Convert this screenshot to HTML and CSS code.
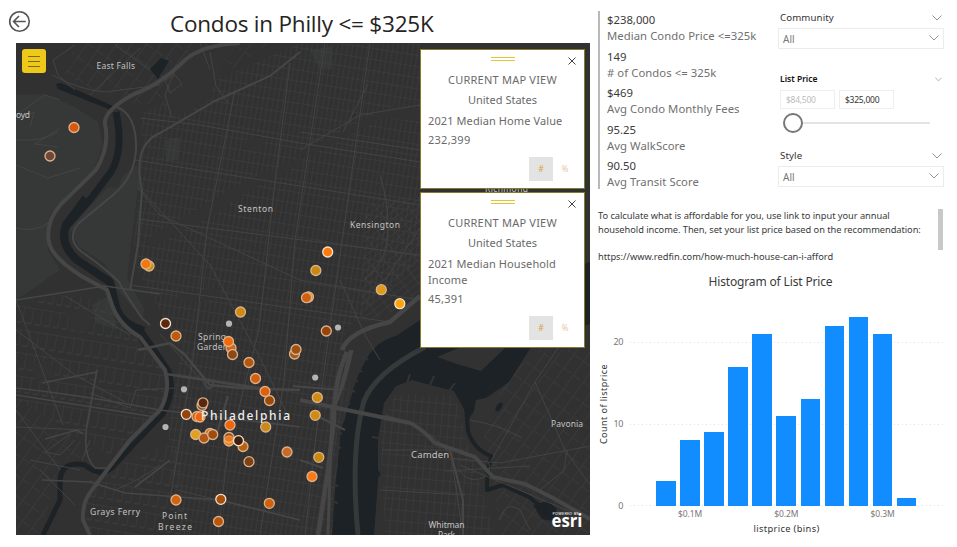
FILE: index.html
```html
<!DOCTYPE html>
<html lang="en">
<head>
<meta charset="utf-8">
<title>Condos in Philly</title>
<link rel="stylesheet" href="styles.css">
</head>
<body>
<div class="report">
  <main class="left">
    <header class="head">
      <svg class="back" viewBox="0 0 24 24"><circle cx="12" cy="12" r="10.2"/><path d="M18.5 12H6M11.5 6.3 5.8 12l5.7 5.7"/></svg>
      <h1><span>Condos in Philly &lt;= $325K</span></h1>
    </header>
    <section class="map">
      <svg class="basemap" viewBox="16 43 574 492">
        <defs>
          <pattern id="fine" width="5" height="11" patternUnits="userSpaceOnUse" patternTransform="rotate(9)"><path d="M0 0V11M0 0H5"/></pattern>
          <pattern id="fine2" width="9" height="23" patternUnits="userSpaceOnUse" patternTransform="rotate(9)"><path d="M0 0V16M0 0H9M4 16H9"/></pattern>
          <pattern id="diag" width="6" height="13" patternUnits="userSpaceOnUse" patternTransform="rotate(52)"><path d="M0 0V13M0 0H6"/></pattern>
          <pattern id="loose" width="12" height="17" patternUnits="userSpaceOnUse" patternTransform="rotate(36)"><path d="M0 0V17M0 0H9"/></pattern>
          <pattern id="camden" width="7" height="11" patternUnits="userSpaceOnUse" patternTransform="rotate(5)"><path d="M0 0V11M0 0H7"/></pattern>
        </defs>
        <rect x="16" y="43" width="574" height="492" fill="#313131"/>
        <g class="park">
          <path d="M16 95 45 94 75 107 98 122 103 145 94 170 70 192 50 215 48 250 60 270 16 300Z"/>
          <path d="M138 188 108 187 70 228 78 246 105 264 118 290 142 319 145 310 127 278Z"/>
          <path d="M118 188 142 190 137 164 123 176Z"/>
          <path d="M310 50 332 46 333 69 320 70Z"/>
          <path d="M165 140 180 137 178 160 166 161Z"/>
          <path d="M92 305 110 295 118 330 96 323Z"/>
        </g>
        <g class="blocks">
          <path fill="url(#fine)" d="M143 113 300 43H420V260L345 330 350 385 335 535H180L168 430 180 350 133 260Z"/>
          <path fill="url(#fine2)" d="M60 295 110 300 135 335 168 375 160 415 110 455 16 400V305Z"/>
          <path fill="url(#fine2)" d="M90 475 180 440 185 535H85Z"/>
          <path fill="url(#loose)" d="M75 43H270L180 105 120 103 65 75ZM16 395 100 455 60 460 40 535H16Z"/>
          <path fill="url(#diag)" d="M365 205 420 195V300L360 325Z"/>
          <path fill="url(#camden)" d="M395 395 455 395 465 435 495 535H385L380 430Z"/>
          <path fill="url(#loose)" d="M475 400 540 350H590V535H500L490 465Z"/>
        </g>
        <g class="clear">
          <path d="M178 293 219 288 221 299 180 303ZM242 141 258 136 264 144 260 151 244 149ZM145 240 245 181 300 158 302 164 250 190 210 217 150 248ZM300 152 390 107 420 109V121L382 118 305 158Z"/>
          <path d="M67 312 92 308 88 333 73 330ZM32 365 51 360 53 377 36 381ZM182 60 235 44 205 105 175 115 160 95Z"/>
        </g>
        <g class="water">
          <path d="M377 348Q361 360 351 398L341 430 335 490 332 535H374L378 480 378 438 384 403 396 386 412 380 430 385 454 391 464 409 468 420 480 402 509 382 531 347Z"/>
          <path d="M366 360Q376 341 396 336L420 320 590 262V324L540 340 500 362 370 378Z"/>
          <path d="M533 505 548 501 557 509 553 521 542 519Z"/>
          <path d="M150 69 161 58 169 61 158 79ZM56 84 61 83 113 106 111 110 58 89Z"/>
        </g>
        <path class="land" d="M437 357 466 345 510 330 504 349 481 371 457 364Z"/>
        <path class="land" d="M476 400 499 395 500 405 490 418 471 427Z"/>
        <g class="river">
          <path stroke-width="7" d="M116 112Q124 150 111 172L89 201 66 227"/>
          <path stroke-width="8" d="M86 198 66 225Q59 244 77 260L110 282 116 307Q121 324 144 331"/>
          <path stroke-width="10" d="M136 327 149 346"/>
          <path stroke-width="5" d="M150 343 169 371Q176 393 163 414L134 444 112 468Q101 478 85 465 62 460 60 480V500L43 535"/>
          <path stroke-width="4" d="M466 405 468 431Q474 450 491 456L487 478V490L503 485 529 497 548 512"/>
        </g>
        <g class="piers"><path d="M368 360 358 354M362 372 352 365M358 382 349 376M355 392 347 388M350 404 342 400M345 419 338 416M342 434 336 431M341 448 335 446M338 466 331 464M338 486 331 484M338 503 331 501M378 438 372 437M407 383 410 374M430 385 434 376M449 391 455 383"/></g>
        <circle class="dotwater" cx="377" cy="474" r="3.2"/>
        <ellipse class="dotwater" cx="499" cy="407" rx="2.5" ry="5" transform="rotate(35 499 407)"/>
        <g class="minor">
          <path d="M52 75Q80 90 105 92L160 85M60 100 45 95 16 115M75 45 53 60 58 75 75 90M140 48 90 95M115 45 150 70M210 52 216 86 228 103M175 70 165 95 172 118M165 80 175 75 182 84 170 93Z"/>
          <path d="M16 140Q40 142 58 132M16 165 48 178 80 168M16 120 34 112 30 127M58 147 35 144 60 128M16 228Q35 233 50 222M140 118 200 125 300 143 420 162M135 160 420 205M138 188 160 215 300 280 420 300"/>
          <path d="M290 63 274 190 259 330 228 450 218 535M235 90 207 230 193 360 170 500M325 43 295 240 284 380 260 535M370 43 345 220 320 400 305 535M138 219 420 255M130 285 390 322M16 300 63 425M16 330 75 375 125 402M65 296 130 335"/>
          <path d="M143 192 210 265 260 358 290 420M160 334 210 390M420 105 360 115 300 150M368 84 343 132M300 132 420 150M177 490 300 520M90 393 130 408 136 390 175 388"/>
          <path d="M16 427 85 430M30 460 80 470M75 505 40 470M16 410 60 470M75 440 60 455 45 452 70 434M90 440 82 460M115 490Q140 480 160 465"/>
          <path d="M385 415Q430 427 451 455L463 535M450 458 500 463 590 446M445 471 530 466M460 465 590 520M470 420Q500 425 522 438M491 461 535 382 558 348M535 382 565 450 590 485M567 450 564 470 540 490M382 450H450M380 490 465 495M460 470a15 12 0 1 0 28-8M500 520Q505 500 520 510L530 530"/>
          <path d="M200 43 210 70M380 175Q395 225 382 260L365 280M385 280 420 228M380 360 365 335 340 280"/>
        </g>
        <g class="road">
          <path stroke-width="4" d="M240 43Q202 45 185 60 160 85 134 94 103 111 105 124 110 147 96 170L61 204Q45 223 49 242 52 258 83 277L107 290 112 305Q119 325 140 337L165 370Q171 390 160 410L130 440 107 470 92 490Q82 502 83 520L90 535"/>
          <path stroke-width="2" d="M130 290 138 244 142 190Q132 145 160 133L215 101 270 76 300 52M117 107Q137 115 136 150 134 178 113 195L78 224Q66 240 82 252 105 268 119 282 124 292 142 318L150 325"/>
          <path stroke-width="1.6" d="M16 300 105 286 160 294M16 388Q80 395 160 410L300 427M16 395 155 417M42 480 90 482 125 493 220 500 300 520M97 370 87 425Q82 455 95 468L110 468M42 383 97 372M135 487 170 460M45 439 77 430 83 434"/>
          <path stroke-width="2.5" d="M138 350 170 343 185 355 210 385 240 388 300 390M166 374 270 390M228 396 215 440"/>
          <path stroke-width="4.5" d="M342 350Q349 331 390 322L420 296M347 352Q334 380 334 420L328 470 318 535"/>
          <path stroke-width="3" d="M352 350Q343 392 332 410L328 535"/>
          <path class="dim" stroke-width="5" d="M425 347Q375 373 364 401 350 450 358 535"/>
          <path stroke-width="4" d="M300 400 342 409 410 423Q420 427 435 443L475 457 493 477 525 484 553 498 590 519"/>
          <path stroke-width="2" d="M293 386 340 390 350 350M315 415 345 430M450 450 463 500 463 535M300 460 323 468"/>
          <circle cx="209" cy="384" r="4" stroke-width="2"/>
        </g>
        <g class="labels">
          <text x="96.500" y="69" textLength="38.500">East Falls</text>
          <text x="16" y="117.500" textLength="14">oyd</text>
          <text x="238" y="212" textLength="35">Stenton</text>
          <text x="350" y="228" textLength="50">Kensington</text>
          <text x="485" y="191.500" textLength="43">Richmond</text>
          <text x="198" y="339.500" textLength="28">Spring</text>
          <text x="197" y="349.500" textLength="31">Garden</text>
          <text x="90" y="515" textLength="50">Grays Ferry</text>
          <text x="162" y="518.500" textLength="25">Point</text>
          <text x="158" y="529.500" textLength="34">Breeze</text>
          <text x="551" y="427" textLength="32">Pavonia</text>
          <text class="md" x="411" y="458" textLength="38">Camden</text>
          <text x="428.500" y="528" textLength="36">Whitman</text>
          <text x="438" y="537.500" textLength="17">Park</text>
        </g>
        <g class="pins">
          <circle cx="74" cy="127.500" r="5" fill="#d8590c"/><circle cx="50" cy="156" r="5" fill="#704838" stroke="#b99d8c"/>
          <circle cx="149" cy="266" r="5" fill="#c79210"/><circle cx="146" cy="264" r="5" fill="#f0780c"/>
          <circle cx="240.500" cy="312" r="5" fill="#d08a10"/><circle class="hi" cx="165.500" cy="323.500" r="5" fill="#5e2a0c"/>
          <circle cx="176" cy="336" r="5" fill="#bd5a0c"/><circle cx="231" cy="348" r="5" fill="#d0661a"/>
          <circle cx="228.500" cy="341.500" r="5" fill="#f06a0a"/><circle cx="232.500" cy="354.500" r="5" fill="#8a4a16"/>
          <circle cx="249" cy="362.500" r="5" fill="#b5560e"/><circle cx="255.500" cy="378.500" r="5" fill="#d2600e"/>
          <circle cx="269.500" cy="400.500" r="5" fill="#9c4a0a"/><circle cx="265" cy="391.500" r="5" fill="#e0600a"/>
          <circle cx="294.500" cy="354" r="5" fill="#a05c20"/><circle cx="296" cy="349.500" r="5" fill="#a05010"/>
          <circle cx="326.300" cy="331" r="5" fill="#964408"/><circle cx="308.500" cy="297" r="5" fill="#f09020"/>
          <circle cx="306.500" cy="297.700" r="5" fill="#d06010"/><circle cx="315.800" cy="270.500" r="5" fill="#c98a12"/>
          <circle class="hi" cx="327.700" cy="252" r="5" fill="#fa7a0c"/><circle cx="381.300" cy="289.700" r="5" fill="#e09a1c"/>
          <circle class="hi" cx="399.800" cy="303.700" r="5" fill="#fca408"/><circle cx="317.300" cy="397.500" r="5" fill="#d08c10"/>
          <circle cx="315.200" cy="415.300" r="5" fill="#d08c10"/><circle cx="265.700" cy="427" r="5" fill="#c98a18"/>
          <circle cx="318.800" cy="457.300" r="5" fill="#c8890f"/><circle cx="312" cy="476.500" r="5" fill="#fb7a14"/>
          <circle cx="287" cy="452" r="5" fill="#c86a28"/><circle cx="249" cy="461.700" r="5" fill="#7c4216"/>
          <circle cx="202" cy="405.500" r="5" fill="#8a4a28"/><circle cx="203" cy="402.800" r="5" fill="#5a2810"/>
          <circle class="hi" cx="186.300" cy="414.300" r="5" fill="#94440c"/><circle cx="197" cy="416.500" r="5" fill="#d85a0a"/>
          <circle cx="200" cy="417" r="5" fill="#f0640a"/><circle cx="230" cy="425" r="5" fill="#f0640a"/>
          <circle cx="195.700" cy="434.500" r="5" fill="#e0a024"/><circle cx="210" cy="433.500" r="5" fill="#d06a2a"/>
          <circle cx="204" cy="438" r="5" fill="#b05818"/><circle cx="212.700" cy="434.500" r="5" fill="#a04c0c"/>
          <circle cx="229" cy="441" r="5" fill="#fc8008"/><circle cx="229" cy="437.500" r="5" fill="#e87020" fill-opacity=".5"/>
          <circle cx="243" cy="446.500" r="5" fill="#b8640c"/><circle class="hi" cx="238.500" cy="440.700" r="5" fill="#3e2010"/>
          <circle cx="176" cy="500" r="5" fill="#d06412"/><circle class="hi" cx="220.800" cy="499.300" r="5" fill="#a8500a"/>
          <circle cx="218.500" cy="521.500" r="5" fill="#b8560c"/><circle cx="269.300" cy="503.300" r="5" fill="#d0600e"/>
        </g>
        <g class="spots"><circle cx="229" cy="323.700" r="3.100"/><circle cx="338" cy="327.500" r="3.100"/><circle cx="315.200" cy="377.500" r="3.100"/><circle cx="184" cy="389.300" r="3.100"/><circle cx="165.500" cy="427" r="3.100"/></g>
        <g class="labels">
          <text class="city" x="201" y="420" textLength="89">Philadelphia</text>
          <text class="pow" x="552.500" y="515" textLength="26">POWERED BY</text>
          <text class="esri" x="551.500" y="527" textLength="31" lengthAdjust="spacingAndGlyphs">esri</text>
        </g>
      </svg>
      <button class="menu"><i></i><i></i><i></i></button>
      <div class="cards">
        <article class="card first">
          <div class="grip"></div>
          <svg class="close" viewBox="0 0 8 8"><path d="M.5.500 7.500 7.500M7.500.500.500 7.500"/></svg>
          <h2>CURRENT MAP VIEW</h2><h3>United States</h3>
          <p class="name wide">2021 Median Home Value</p><p class="val">232,399</p>
          <div class="toggle"><b>#</b><span>%</span></div>
        </article>
        <article class="card second">
          <div class="grip"></div>
          <svg class="close" viewBox="0 0 8 8"><path d="M.5.500 7.500 7.500M7.500.500.500 7.500"/></svg>
          <h2>CURRENT MAP VIEW</h2><h3>United States</h3>
          <p class="name wide">2021 Median Household<br>Income</p><p class="val">45,391</p>
          <div class="toggle"><b>#</b><span>%</span></div>
        </article>
      </div>
    </section>
  </main>
  <aside class="right">
    <div class="top">
      <dl class="kpis">
        <div><dt>$238,000</dt><dd>Median Condo Price &lt;=325k</dd></div>
        <div><dt>149</dt><dd># of Condos &lt;= 325k</dd></div>
        <div><dt>$469</dt><dd>Avg Condo Monthly Fees</dd></div>
        <div><dt>95.25</dt><dd>Avg WalkScore</dd></div>
        <div><dt>90.50</dt><dd>Avg Transit Score</dd></div>
      </dl>
      <div class="slicers">
        <section class="slicer community">
          <h4>Community<svg class="chev" viewBox="0 0 10 6"><path d="M.5.500 5 5 9.500.500"/></svg></h4>
          <div class="select">All<svg class="chev" viewBox="0 0 10 6"><path d="M.5.500 5 5 9.500.500"/></svg></div>
        </section>
        <section class="slicer price">
          <h4><span>List Price</span><svg class="chev small" viewBox="0 0 10 6"><path d="M.5.500 5 5 9.500.500"/></svg></h4>
          <div class="range"><div class="off">$84,500</div><div>$325,000</div></div>
          <div class="slider"><i></i></div>
        </section>
        <section class="slicer style">
          <h4>Style<svg class="chev" viewBox="0 0 10 6"><path d="M.5.500 5 5 9.500.500"/></svg></h4>
          <div class="select">All<svg class="chev" viewBox="0 0 10 6"><path d="M.5.500 5 5 9.500.500"/></svg></div>
        </section>
      </div>
    </div>
    <div class="note">
      <p>To calculate what is affordable for you, use link to input your annual<br>household income. Then, set your list price based on the recommendation:<br><br><span class="link">https://www.redfin.com/how-much-house-can-i-afford</span></p>
      <div class="thumb"></div>
    </div>
    <section class="chart">
      <h5>Histogram of List Price</h5>
      <div class="plotrow">
        <div class="ytitle"><span>Count of listprice</span></div>
        <div class="yaxis"><span>20</span><span>10</span><span>0</span></div>
        <div class="plot">
          <i style="height:24.600px"></i><i style="height:65.600px"></i><i style="height:73.800px"></i><i style="height:139.400px"></i><i style="height:172.200px"></i><i style="height:90.200px"></i><i style="height:106.600px"></i><i style="height:180.400px"></i><i style="height:188.600px"></i><i style="height:172.200px"></i><i style="height:8.200px"></i>
        </div>
      </div>
      <div class="xaxis"><span>$0.1M</span><span>$0.2M</span><span>$0.3M</span></div>
      <div class="xtitle">listprice (bins)</div>
    </section>
  </aside>
</div>
</body>
</html>
```
FILE: styles.css
```css
* { box-sizing: border-box; }
body { margin: 0; background: #fff; font-family: "Noto Sans", "Open Sans", sans-serif; color: #333; }
h1, h2, h3, h4, h5, p, dl, dd { margin: 0; font-weight: 400; }
.report { width: 957px; height: 547px; display: grid; grid-template-columns: 590px 367px; overflow: hidden; }

.head { height: 43px; padding-left: 8px; display: flex; align-items: center; }
.back { width: 23px; height: 23px; fill: none; stroke: #555; stroke-width: 1.7; }
h1 { margin-left: 139px; font: 22.500px/32px "Open Sans", sans-serif; letter-spacing: -.22px; color: #252423; white-space: nowrap; padding-top: 4px; }

.map { position: relative; width: 574px; height: 492px; margin-left: 16px; overflow: hidden; }
.basemap { display: block; width: 574px; height: 492px; }
.basemap pattern path { stroke: #444; stroke-width: .75; fill: none; }
.park path { fill: #353837; }
.clear path, .land { fill: #323232; }
.water path, .dotwater { fill: #1c2225; }
.river path { fill: none; stroke: #1c2225; stroke-linejoin: round; }
.piers path { stroke: #333; stroke-width: 2; }
.minor path { fill: none; stroke: #454545; stroke-width: .9; }
.road path, .road circle { fill: none; stroke: #464646; }
.road .dim { stroke: #363939; }
.labels text { font: 8.5px "Noto Sans", sans-serif; fill: #c3c3c3; }
.labels .md { font-size: 9.500px; }
.labels .city { font-size: 12px; font-weight: 500; fill: #eee; }
.labels .pow { font-size: 3.800px; fill: #fff; }
.labels .esri { font: bold 17px "Open Sans", sans-serif; fill: #fff; }
.pins circle { stroke: #dcb28c; stroke-width: 1.300; }
.pins .hi { stroke: #f6e2d0; }
.spots circle { fill: #b4b4b4; }

.menu { position: absolute; left: 6px; top: 6px; width: 24px; height: 24px; padding: 0; border: 0; border-radius: 3px; background: #efc919; display: flex; flex-direction: column; align-items: center; justify-content: center; gap: 4px; }
.menu i { width: 12px; height: 1px; background: #7c6910; }
.cards { position: absolute; left: 404px; top: 6px; width: 165px; display: flex; flex-direction: column; gap: 3px; }
.card { position: relative; background: #fff; border: 1.500px solid #877a2c; padding: 7px 7px 0; color: #6a6a6a; font-size: 11px; }
.first { height: 140px; }
.second { height: 156px; }
.grip { width: 24px; height: 4px; margin: 0 auto; border-top: 1px solid #dfc637; border-bottom: 1px solid #dfc637; }
.close { position: absolute; right: 8px; top: 7px; width: 8px; height: 8px; fill: none; stroke: #444; stroke-width: 1; overflow: visible; }
.card h2, .card h3 { font-size: 11px; text-align: center; line-height: 20px; }
.card h2 { margin-top: 9px; letter-spacing: .22px; }
.name { line-height: 16px; margin-top: 3px; white-space: nowrap; }
.wide { letter-spacing: .1px; }
.val { line-height: 21px; letter-spacing: .25px; }
.toggle { position: absolute; right: 7px; bottom: 7px; display: flex; font-size: 8px; line-height: 24px; text-align: center; color: #ecc69d; }
.toggle b, .toggle span { width: 24px; height: 24px; font-weight: 400; }
.toggle b { background: #e3e3e3; color: #dca03c; }

.right { padding-left: 8px; }
.top { display: grid; grid-template-columns: 180px 166px; height: 204px; }
.kpis { border-left: 2px solid #b9b9b9; margin-top: 11px; height: 178px; padding: 0 0 0 7px; font-size: 11.300px; white-space: nowrap; }
.kpis div { height: 36.600px; }
.kpis dt { line-height: 17px; color: #3a3a3a; }
.kpis dd { line-height: 16px; color: #707070; letter-spacing: .06px; }
.slicers { padding-top: 11px; }
.slicer h4 { display: flex; justify-content: space-between; align-items: center; padding: 0 2px; font-size: 9.700px; letter-spacing: .1px; line-height: 14px; color: #333; }
.chev { width: 10px; height: 6px; fill: none; stroke: #777; stroke-width: .8; }
.select { height: 21px; margin-top: 3px; border: 1px solid #ececec; padding: 2px 4px 0; display: flex; justify-content: space-between; align-items: center; font-size: 10px; line-height: 17px; color: #777; }
.select .chev { margin-top: -4px; }
.community { height: 61px; }
.price { height: 77px; }
.price h4 { font-size: 8.500px; font-weight: 600; letter-spacing: 0; color: #111; }
.price .small { width: 7px; height: 5px; }
.range { display: flex; gap: 4px; margin: 4px 0 0 2px; }
.range div { width: 55px; height: 19px; border: 1px solid #eee; font: 8.500px/18px "Noto Sans", sans-serif; letter-spacing: -.25px; padding-left: 5px; color: #333; }
.range .off { color: #bbb; }
.slider { height: 20px; margin: 4px 14px 0 5px; display: flex; align-items: center; }
.slider i { width: 20px; height: 20px; border: 2px solid #777; border-radius: 50%; }
.slider::after { content: ""; flex: 1; height: 2px; background: #e3e3e3; }
.style { padding-top: 0; }

.note { display: flex; justify-content: space-between; height: 66px; padding: 5px 14px 0 0; white-space: nowrap; }
.note p { font-size: 9.300px; line-height: 13.500px; letter-spacing: -.055px; color: #3a3a3a; }
.link { letter-spacing: -.02px; }
.thumb { width: 5px; height: 41px; background: #c8c8c8; }
.chart h5 { font-size: 12px; line-height: 20px; height: 44px; padding-top: 2px; text-align: center; padding-right: 14px; letter-spacing: -.15px; color: #3a3a3a; }
.plotrow { display: flex; height: 192px; }
.ytitle { width: 13px; display: flex; align-items: center; justify-content: center; }
.ytitle span { writing-mode: vertical-rl; transform: rotate(180deg); font-size: 9px; letter-spacing: .45px; line-height: 13px; white-space: nowrap; margin: -12px 2px 0 0; }
.yaxis { width: 17px; padding: 20px 5px 0 0; font-size: 9px; line-height: 16px; text-align: right; color: #777; margin-right: 2px; letter-spacing: -.4px; }
.yaxis span { display: block; height: 82px; }
.plot { width: 313px; padding-left: 26px; display: flex; align-items: flex-end; gap: 4.600px; background: repeating-linear-gradient(90deg, #e1e1e1 0 1px, transparent 1px 4px) 0 28px / 100% 1px no-repeat, repeating-linear-gradient(90deg, #e1e1e1 0 1px, transparent 1px 4px) 0 110px / 100% 1px no-repeat, repeating-linear-gradient(90deg, #e1e1e1 0 1px, transparent 1px 4px) 0 191px / 100% 1px no-repeat; }
.plot i { flex: none; width: 19.500px; background: #118dff; }
.xaxis { display: flex; margin-left: 68px; font-size: 8.500px; line-height: 16px; color: #777; letter-spacing: -.1px; }
.xaxis span { width: 48px; margin-right: 48.300px; text-align: center; }
.xtitle { font-size: 9.300px; letter-spacing: .35px; line-height: 13px; text-align: center; margin: 0 0 0 27px; width: 323px; }
```
